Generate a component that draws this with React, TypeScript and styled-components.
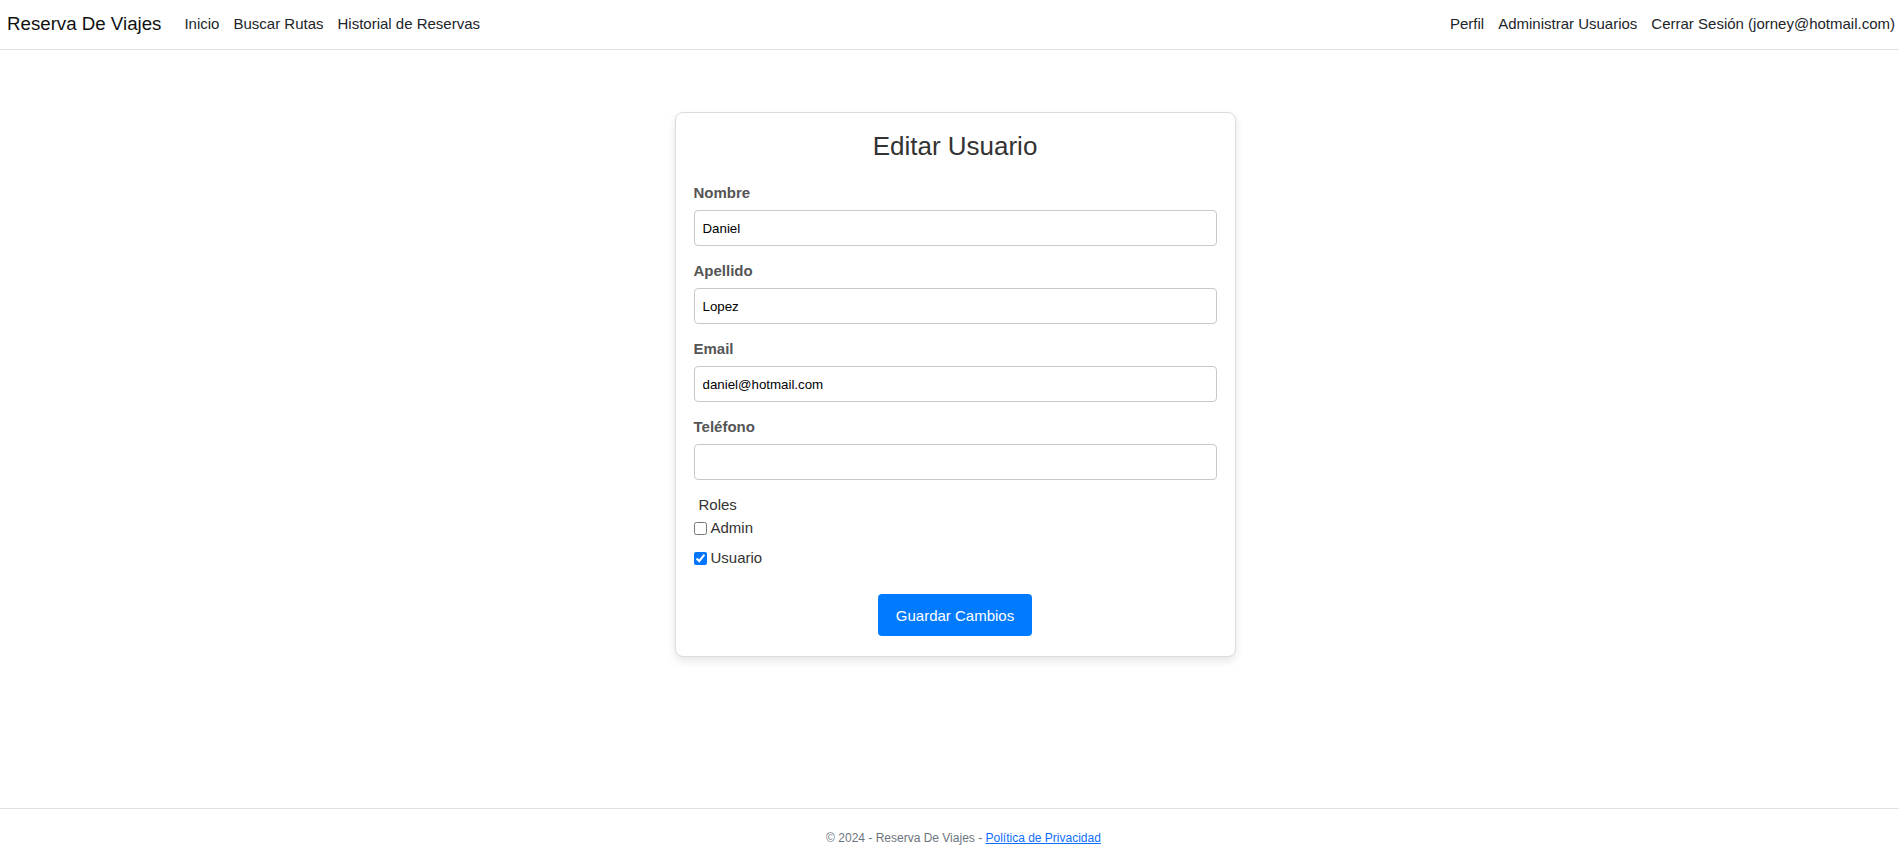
import styled, { createGlobalStyle } from 'styled-components';

const GlobalStyle = createGlobalStyle`
  html, body {
    margin: 0;
    padding: 0;
    background: #fff;
    font-family: "Liberation Sans", Arial, sans-serif;
    color: #212529;
  }

  * {
    box-sizing: border-box;
  }
`;

const leftLinks = ['Inicio', 'Buscar Rutas', 'Historial de Reservas'];
const rightLinks = ['Perfil', 'Administrar Usuarios', 'Cerrar Sesión (jorney@hotmail.com)'];

const fields = [
  { label: 'Nombre', value: 'Daniel' },
  { label: 'Apellido', value: 'Lopez' },
  { label: 'Email', value: 'daniel@hotmail.com' },
  { label: 'Teléfono', value: '' },
];

const roles = [
  { name: 'Admin', checked: false },
  { name: 'Usuario', checked: true },
];

const App = () => {
  return (
    <Page>
      <GlobalStyle />
      <NavBar>
        <NavGroup>
          <Brand>Reserva De Viajes</Brand>
          {leftLinks.map(link => (
            <NavLink key={link}>{link}</NavLink>
          ))}
        </NavGroup>
        <NavGroup>
          {rightLinks.map(link => (
            <NavLink key={link}>{link}</NavLink>
          ))}
        </NavGroup>
      </NavBar>

      <Main>
        <Card>
          <Title>Editar Usuario</Title>
          {fields.map(field => (
            <FieldGroup key={field.label}>
              <Label>{field.label}</Label>
              <Input type='text' defaultValue={field.value} />
            </FieldGroup>
          ))}

          <RolesTitle>Roles</RolesTitle>
          <RoleList>
            {roles.map(role => (
              <RoleRow key={role.name}>
                <input type='checkbox' defaultChecked={role.checked} />
                {role.name}
              </RoleRow>
            ))}
          </RoleList>

          <Actions>
            <SaveButton type='button'>Guardar Cambios</SaveButton>
          </Actions>
        </Card>
      </Main>

      <Footer>
        © 2024 - Reserva De Viajes - <a href='#'>Política de Privacidad</a>
      </Footer>
    </Page>
  );
};

const Page = styled.div`
  display: flex;
  flex-direction: column;
  min-height: 100vh;
`;

const NavBar = styled.nav`
  display: flex;
  justify-content: space-between;
  align-items: center;

  height: 50px;
  padding: 0 4px 2px 7px;

  border-bottom: 1px solid #e2e2e6;
  background: #fff;
`;

const NavGroup = styled.div`
  display: flex;
  align-items: center;
`;

const Brand = styled.span`
  margin-right: 16px;

  font-size: 18.7px;
  color: #111;
`;

const NavLink = styled.span`
  padding: 0 7px;

  font-size: 15px;
  color: #212529;
  cursor: pointer;

  &:last-child {
    padding-right: 0;
  }
`;

const Main = styled.main`
  flex: 1;
  display: flex;
  justify-content: center;
  align-items: flex-start;

  padding: 62px 0 0 11px;
`;

const Card = styled.div`
  width: 561px;
  padding: 18px 18px 20px;

  border: 1px solid #dcdcdc;
  border-radius: 8px;
  box-shadow: 0 4px 8px rgba(0, 0, 0, 0.1);
  background: #fff;
`;

const Title = styled.h2`
  margin: 0 0 23px;

  text-align: center;
  font-weight: 400;
  font-size: 26px;
  line-height: 30px;
  color: #333;
`;

const FieldGroup = styled.div`
  margin-bottom: 16px;
`;

const Label = styled.label`
  display: block;
  margin-bottom: 8px;

  font-weight: 700;
  font-size: 15px;
  line-height: 18px;
  color: #555;
`;

const Input = styled.input`
  display: block;
  width: 100%;
  height: 36px;
  padding: 0 8px;

  border: 1px solid #c8c8c8;
  border-radius: 4px;
  outline: none;

  font-family: "Liberation Sans", Arial, sans-serif;
  font-size: 13.3px;
  color: #000;
`;

const RolesTitle = styled.div`
  padding-left: 5px;

  font-size: 15px;
  line-height: 18px;
  color: #333;
`;

const RoleList = styled.div`
  display: flex;
  flex-direction: column;
  gap: 12px;

  margin-top: 5px;
`;

const RoleRow = styled.label`
  display: flex;
  align-items: center;
  gap: 4px;

  font-size: 15px;
  line-height: 18px;
  color: #333;

  input {
    width: 13px;
    height: 13px;
    margin: 0;
  }
`;

const Actions = styled.div`
  display: flex;
  justify-content: center;

  margin-top: 27px;
`;

const SaveButton = styled.button`
  height: 42px;
  padding: 0 18px;

  border: none;
  border-radius: 4px;
  background: #007bff;

  font-family: "Liberation Sans", Arial, sans-serif;
  font-size: 15px;
  color: #fff;
  cursor: pointer;
`;

const Footer = styled.footer`
  padding: 22px 0 11px 28px;

  border-top: 1px solid #e2e2e6;

  text-align: center;
  font-size: 12px;
  line-height: 14px;
  color: #6c757d;

  a {
    color: #0d6efd;
  }
`;

export default App;
